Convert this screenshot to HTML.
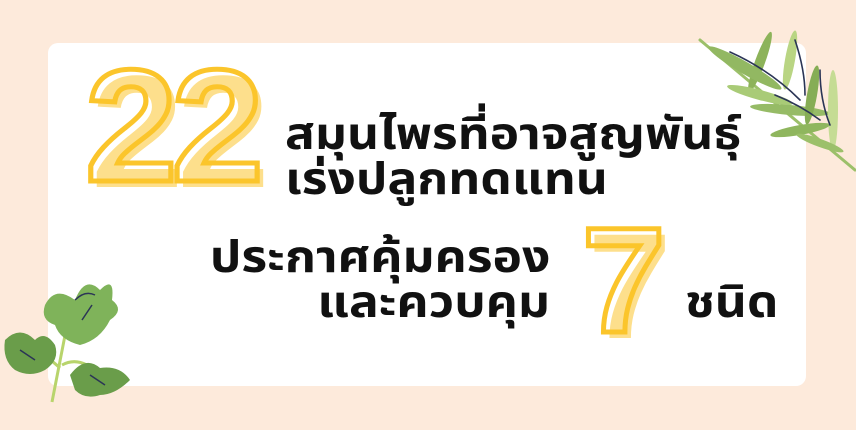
<!DOCTYPE html>
<html><head><meta charset="utf-8"><style>
html,body{margin:0;padding:0}
body{width:856px;height:430px;background:#fdeadb;position:relative;overflow:hidden;font-family:"Liberation Sans","Noto Sans Thai","Loma","Garuda",sans-serif}
.card{position:absolute;left:48px;top:43px;width:758px;height:343px;background:#fff;border-radius:10px}
.t{position:absolute;font-weight:bold;color:#111;font-size:44px;line-height:45px;white-space:nowrap;transform:scaleX(1.13)}
.l{transform-origin:left center}
.r{transform-origin:right center}
svg{position:absolute;overflow:visible}
</style></head><body>
<div class="card"></div>
<svg width="856" height="430" style="left:0;top:0">
 <g font-family="Liberation Sans, sans-serif" font-weight="bold">
  <text x="91" y="187" font-size="160" fill="#fddf8c" letter-spacing="-6" transform="translate(91 0) scale(1.04 1) translate(-91 0)">22</text>
  <text x="85" y="181" font-size="160" fill="none" stroke="#fbc52b" stroke-width="5" letter-spacing="-6" transform="translate(85 0) scale(1.04 1) translate(-85 0)">22</text>
  <text x="588" y="338" font-size="150" fill="#fddf8c">7</text>
  <text x="582" y="332" font-size="150" fill="none" stroke="#fbc52b" stroke-width="5">7</text>
 </g>
 <g stroke-linecap="round">
  <path d="M855 170 L700 40" stroke="#9cc06a" stroke-width="3" fill="none"/>
  <ellipse cx="760" cy="62" rx="32" ry="5" fill="#8db35a" transform="rotate(-70 760 62)"/>
  <ellipse cx="790" cy="60" rx="30" ry="5" fill="#b9d583" transform="rotate(-80 790 60)"/>
  <ellipse cx="745" cy="68" rx="42" ry="6" fill="#92b862" transform="rotate(30 745 68)"/>
  <ellipse cx="760" cy="95" rx="34" ry="5" fill="#a9cb77" transform="rotate(15 760 95)"/>
  <ellipse cx="790" cy="110" rx="40" ry="5" fill="#96bb66" transform="rotate(5 790 110)"/>
  <ellipse cx="812" cy="95" rx="30" ry="5" fill="#86ad55" transform="rotate(-80 812 95)"/>
  <ellipse cx="833" cy="110" rx="40" ry="5" fill="#c5dc94" transform="rotate(-90 833 110)"/>
  <ellipse cx="800" cy="130" rx="30" ry="5" fill="#8fb65e" transform="rotate(-10 800 130)"/>
  <ellipse cx="820" cy="143" rx="25" ry="4" fill="#9cc06a" transform="rotate(20 820 143)"/>
  <path d="M730 52 Q770 70 800 100 M795 40 Q805 70 805 95 M775 95 Q800 105 820 120 M820 70 Q820 100 830 125" stroke="#2b3556" stroke-width="1.6" fill="none"/>
 </g>
 <g>
  <path d="M52 402 Q62 350 68 320 M60 368 Q40 350 20 340 M62 365 Q80 355 100 375" stroke="#b8d46c" stroke-width="3" fill="none"/>
  <path d="M45 305 Q55 285 75 300 Q85 275 100 290 Q115 275 112 300 Q125 310 110 320 Q100 340 80 345 Q60 340 55 325 Q40 320 45 305Z" fill="#7fb35a"/>
  <path d="M5 340 Q20 325 35 340 Q45 330 55 345 Q60 360 45 370 Q30 378 15 370 Q2 360 5 340Z" fill="#6a9d4a"/>
  <path d="M70 375 Q85 355 100 368 Q120 365 130 380 Q115 395 100 395 Q85 400 75 390Z" fill="#6a9d4a"/>
  <path d="M75 300 Q85 290 95 295 M82 320 L92 305 M20 350 L35 360 M90 375 L105 385" stroke="#2b3556" stroke-width="1.5" fill="none"/>
 </g>
</svg>
<div class="t l" style="left:285px;top:112px">สมุนไพรที่อาจสูญพันธุ์</div>
<div class="t l" style="left:285px;top:157px">เร่งปลูกทดแทน</div>
<div class="t r" style="right:306px;top:235px;text-align:right">ประกาศคุ้มครอง</div>
<div class="t r" style="right:306px;top:280px;text-align:right">และควบคุม</div>
<div class="t l" style="left:685px;top:280px">ชนิด</div>
</body></html>
